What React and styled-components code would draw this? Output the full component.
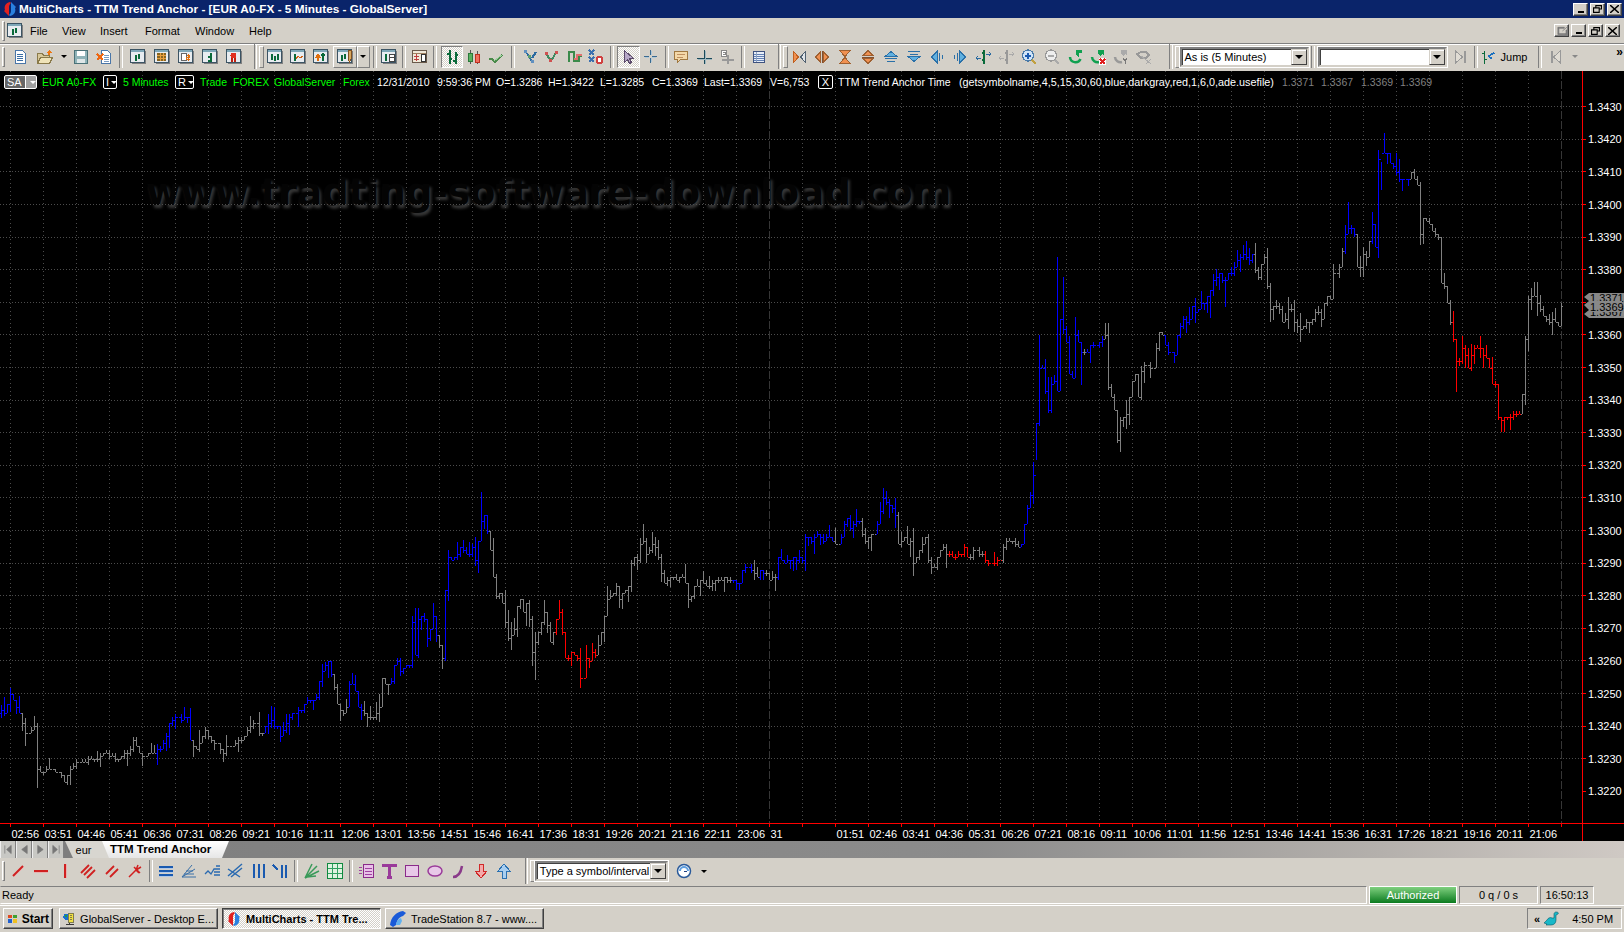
import React from 'react';
import styled, { createGlobalStyle } from 'styled-components';

const Global = createGlobalStyle`
  html, body { margin: 0; padding: 0; background: #d4d0c8; overflow: hidden; }
  * { box-sizing: border-box; }
`;

const UI = `"Liberation Sans", Arial, sans-serif`;
const FACE = '#d4d0c8';

/* ---------- shell ---------- */
const Shell = styled.div`
  width: 1624px; height: 932px; display: flex; flex-direction: column;
  background: ${FACE}; font: 11px ${UI}; color: #000; overflow: hidden;
`;
const TitleBar = styled.div`
  height: 18px; background: #0a246a; color: #fff; display: flex; align-items: center;
  padding: 0 2px 0 2px; font-weight: 700; font-size: 11.8px; gap: 1px; flex: none;
`;
const TitleText = styled.span` flex: 1; `;
const WinBtns = styled.div` display: flex; gap: ${p => p.$gap || 2}px; align-items: center; `;
const WinBtn = styled.div`
  width: 15px; height: 13px; background: ${FACE}; display: flex; align-items: center; justify-content: center;
  border: 1px solid; border-color: #fff #404040 #404040 #fff;
  box-shadow: inset -1px -1px 0 #808080;
`;
const MenuBar = styled.div`
  height: 26px; display: flex; align-items: center; flex: none; position: relative;
  border-bottom: 1px solid #808080; box-shadow: 0 1px 0 #fff;
`;
const Grip = styled.div`
  width: 3px; height: ${p => p.$h || 20}px; margin: 0 ${p => p.$mr ?? 5}px 0 2px; flex: none;
  border: 1px solid; border-color: #fff #808080 #808080 #fff;
`;
const MenuIcon = styled.div` width: 17px; height: 15px; margin: 0 6px 0 1px; flex: none; display: flex; `;
const MenuItem = styled.span`
  flex: none; width: ${p => p.$w}px; font-size: 11px;
`;
const MdiBtns = styled.div` margin-left: auto; padding-right: 4px; display: flex; align-items: center; gap: 2px; `;

const Toolbar = styled.div`
  height: ${p => p.$h || 27}px; padding-bottom: 2px; display: flex; align-items: center; flex: none; position: relative;
`;
const Btn = styled.div`
  flex: none; width: ${p => p.$w || 23}px; height: 22px; display: flex; align-items: center; justify-content: center;
  ${p => p.$pressed ? `
    border: 1px solid; border-color: #808080 #fff #fff #808080;
    background-color: #fff;
    background-image: repeating-conic-gradient(#d4d0c8 0 25%, #fff 0 50%);
    background-size: 2px 2px;
  ` : ''}
  ${p => p.$raised ? `border: 1px solid; border-color: #fff #808080 #808080 #fff;` : ''}
`;
const Sep = styled.div`
  flex: none; width: ${p => p.$w || 10}px; height: 22px; display: flex; justify-content: center;
  &::before { content: ''; width: 2px; height: 100%; border-left: 1px solid #808080; border-right: 1px solid #fff; }
`;
const Break = styled.div`
  flex: none; width: ${p => p.$w}px; align-self: stretch; display: flex; align-items: center;
  padding-left: ${p => p.$pl}px;
  &::before { content: ''; width: 2px; height: 100%; border-left: 1px solid #808080; border-right: 1px solid #fff; }
  &::after { content: ''; width: 3px; height: 20px; margin-left: 2px; border: 1px solid; border-color: #fff #808080 #808080 #fff; }
`;
const Combo = styled.div`
  flex: none; width: ${p => p.$w}px; height: 20px; background: #fff; display: flex; align-items: center;
  border: 2px solid; border-color: #808080 #d4d0c8 #d4d0c8 #808080; outline: 1px solid #fff;
  box-shadow: inset 1px 1px 0 #404040; font-size: 11px; padding-left: 3px; white-space: nowrap;
`;
const ComboText = styled.span` flex: 1; `;
const ComboBtn = styled.div`
  width: 16px; height: 16px; background: ${FACE}; flex: none; display: flex; align-items: center; justify-content: center;
  border: 1px solid; border-color: #d4d0c8 #404040 #404040 #d4d0c8; box-shadow: inset 1px 1px 0 #fff;
  &::after { content: ''; border: 4px solid transparent; border-top: 4px solid #000; border-bottom: 0; }
`;
const Caret = styled.div`
  width: 0; height: 0; border: 3px solid transparent; border-top: 3px solid ${p => p.$c || '#000'}; border-bottom: 0;
`;
const JumpLabel = styled.span` margin-left: 5px; `;
const Chevron = styled.span`
  position: absolute; right: 2px; top: 1px; font-size: 12px; font-weight: 700; letter-spacing: -1px;
`;

/* ---------- chart ---------- */
const ChartArea = styled.div`
  height: 770px; background: #000; position: relative; flex: none; overflow: hidden;
`;
const ChartSvg = styled.svg`
  position: absolute; inset: 0; display: block; width: 100%; height: 100%;
`;
const Watermark = styled.div`
  position: absolute; left: 146px; top: 99px; white-space: nowrap;
  font: 700 37.2px "DejaVu Sans", sans-serif; color: #040404;
  text-shadow: 2px 3px 3px #383838;
`;
const Legend = styled.div`
  position: absolute; left: 4px; top: 4px; height: 13px; display: flex; align-items: center; white-space: nowrap;
  font: 10.5px ${UI};
`;
const LegendText = styled.span`
  flex: none; width: ${p => p.$w}px; color: ${p => p.$c || '#fff'}; font-size: ${p => p.$fs || 10.5}px;
`;
const Tag = styled.span`
  flex: none; margin-right: ${p => p.$mr || 0}px; height: 14px; width: ${p => p.$w}px;
  border: 1px solid #fff; border-radius: 2px; color: #fff; display: flex; align-items: center; font-size: 11px;
  justify-content: ${p => p.$center ? 'center' : 'flex-start'}; padding-left: ${p => p.$center ? 0 : 2}px;
  background: ${p => p.$fill ? 'linear-gradient(90deg, #666 0 20px, #fff 20px 21px, #a0a0a0 21px)' : '#000'}; gap: ${p => p.$fill ? 8 : 2}px;
  &::after { ${p => p.$caret ? `content: ''; border: 3px solid transparent; border-top: 3px solid #fff; border-bottom: 0; margin-top: 1px;` : ''} }
`;

/* ---------- bottom ---------- */
const TabRow = styled.div`
  height: 17px; flex: none; display: flex; align-items: stretch; overflow: hidden;
  background: linear-gradient(90deg, #7d7d7d 0%, #8c8c8c 60%, #b4b0ac 85%, #cfc9c4 100%);
`;
const TabNav = styled.div`
  width: 16px; flex: none; background: #c8c8c4; border-right: 1px solid #808080; border-left: 1px solid #eee;
  display: flex; align-items: center; justify-content: center;
`;
const TabEur = styled.div`
  width: 45px; margin-left: 1px; flex: none; text-align: center; line-height: 18px; font-size: 11px; padding-right: 8px;
  background: #d8d6d0; clip-path: polygon(0 0, 100% 0, 100% 100%, 8px 100%);
`;
const TabActive = styled.div`
  width: 127px; margin-left: -8px; flex: none; font-weight: 700; font-size: 11.5px; line-height: 17px; padding-left: 8px;
  background: linear-gradient(180deg, #fff, #e6e6e6);
  clip-path: polygon(0 0, 100% 0, calc(100% - 7px) 100%, 7px 100%);
`;
const StatusBar = styled.div`
  height: 19px; flex: none; display: flex; align-items: stretch; padding: 0 0 1px 0; gap: 2px;
`;
const StatusMain = styled.div`
  width: 1367px; flex: none; padding: 2px 0 0 1px; border: 1px solid; border-color: #808080 #fff #fff transparent;
`;
const StatusCell = styled.div`
  flex: none; width: ${p => p.$w}px; display: flex; align-items: center; justify-content: center; padding-bottom: 1px;
  border: 1px solid; border-color: #808080 #fff #fff #808080;
  ${p => p.$ok ? `background: linear-gradient(180deg, #7fd07f, #0a7a1e); color: #fff; border-color: #fff;` : ''}
`;
const Taskbar = styled.div`
  height: 28px; flex: none; display: flex; align-items: flex-start; gap: 4px; padding: 2px 2px 0 3px;
  border-top: 1px solid #fff; background: ${FACE};
`;
const TaskBtn = styled.div`
  height: 21px; width: ${p => p.$w}px; flex: none; display: flex; align-items: center; gap: 4px; padding: 0 3px;
  white-space: nowrap; overflow: hidden; font-size: 11px;
  border: 1px solid; border-color: #fff #404040 #404040 #fff; box-shadow: inset -1px -1px 0 #808080;
  ${p => p.$active ? `
    border-color: #404040 #fff #fff #404040; box-shadow: inset 1px 1px 0 #808080; font-weight: 700;
    background-color: #fff;
    background-image: repeating-conic-gradient(#d4d0c8 0 25%, #fff 0 50%);
    background-size: 2px 2px;
  ` : ''}
  ${p => p.$start ? `font-weight: 700; font-size: 12px; margin-right: 2px;` : ''}
`;
const Tray = styled.div`
  margin-left: auto; width: 95px; height: 21px; flex: none; display: flex; align-items: center; padding: 0 0 0 6px; gap: 4px;
  border: 1px solid; border-color: #808080 #fff #fff #808080;
`;
const TrayTime = styled.span` margin-left: 9px; `;
const TrayMore = styled.span` font-weight: 700; font-size: 11px; letter-spacing: -1px; `;

/* ---------- icons ---------- */
const S = ({ children, w = 16, h = 16 }) => (
  <svg width={w} height={h} viewBox={`0 0 ${w} ${h}`} fill="none" shapeRendering="crispEdges">{children}</svg>
);
const Win = ({ children }) => (
  <S w={16} h={15}>
    <rect x="2" y="2" width="14" height="13" fill="#808080" />
    <rect x="0.500" y="0.500" width="14" height="13" fill="#e8ecf0" stroke="#3c5464" />
    <rect x="1" y="1" width="13" height="2" fill="#7fa8b8" />
    {children}
  </S>
);
const G = '#0a6a3a';
const bars = (a) => a.map(([x, y1, y2], i) => <path key={i} d={`M${x}.5 ${y1}V${y2}`} stroke={G} strokeWidth="2" />);
const ico = {
  doc: <S><path d="M3.500 1.500h7l3 3v10h-10z" fill="#fff" stroke="#4a76a8" /><path d="M5 5h6M5 7h6M5 9h6M5 11h6" stroke="#3a6ea5" /></S>,
  open: <S w={18}><path d="M1.500 4.500h5l1 2h6v8h-12z" fill="#d8c89a" stroke="#8a7a4a" /><path d="M1.500 14.500l3-6h12l-3 6z" fill="#efe3b8" stroke="#8a7a4a" /><path d="M10 4l3-3 3 3-2 0v2h-2v-2z" fill="#ee7711" /></S>,
  save: <S><rect x="1.500" y="1.500" width="13" height="13" fill="#8fb3b8" stroke="#4a7278" /><rect x="4" y="2" width="8" height="5" fill="#fff" /><rect x="4" y="10" width="8" height="4" fill="#dfe7e8" /></S>,
  xdoc: <S><path d="M5.500 1.500h6l3 3v10h-9z" fill="#fff" stroke="#4a76a8" /><path d="M8 6h5M8 8h5M8 10h5M8 12h5" stroke="#7a9ac0" /><path d="M1 5l6 6M7 5l-6 6" stroke="#ee6611" strokeWidth="2" /></S>,
  wChart: <Win>{bars([[5, 6, 12], [8, 5, 10]])}</Win>,
  wGrid: <Win><rect x="3" y="4" width="9" height="8" fill="#886622" /><path d="M3 6h9M3 9h9M6 4v8M9 4v8" stroke="#e8a040" /></Win>,
  wDollar: <Win><rect x="3" y="4" width="5" height="7" fill="#fff" stroke="#666" /><path d="M10 5v7M8.500 6.500h3v2h-3v2h3" stroke="#e07010" /></Win>,
  wF: <Win><path d="M10 4.500H8.500v7H6M6 7.500h4" stroke={G} strokeWidth="2" /></Win>,
  wRib: <Win><circle cx="7.500" cy="6.500" r="3" fill="#e03020" /><path d="M6 9v4M9 9v4" stroke="#c02010" strokeWidth="2" /></Win>,
  wBars: <Win>{bars([[4, 5, 11], [7, 7, 12], [10, 5, 11]])}</Win>,
  wLine: <Win>{bars([[4, 5, 12]])}<path d="M6 10l2-3 2 2 3-2" stroke="#d06010" /></Win>,
  wArrow: <Win><path d="M5 12V7M3 9l2-3 2 3" stroke="#e07010" strokeWidth="2" /><path d="M10 4v8M8 6h4" stroke={G} strokeWidth="2" /></Win>,
  wPen: <Win>{bars([[4, 6, 12], [7, 5, 10]])}<path d="M11 1h3v9l-1.500 3-1.500-3z" fill="#d8a860" stroke="#805020" /></Win>,
  wSheet: <Win>{bars([[4, 5, 12]])}<rect x="8" y="5" width="5" height="7" fill="#fff" stroke="#444" /><path d="M8 8.500h5" stroke="#444" /></Win>,
  table: <S><rect x="1.500" y="1.500" width="14" height="12" fill="#f0e8d8" stroke="#6a5a4a" /><path d="M2 4h13" stroke="#a08060" /><path d="M3 7h5M3 10h5M5 5v7" stroke="#c04040" /><rect x="10" y="5" width="4" height="7" fill="#fff" stroke="#333" /></S>,
  ohlc: <S><path d="M5.500 1v14M3 5h3M5 10h3M11.500 3v12M9 12h3M11 6h3" stroke={G} strokeWidth="2" /></S>,
  candle: <S><path d="M4.500 1v14M11.500 2v13" stroke="#555" /><rect x="2.500" y="4.500" width="4" height="8" fill="#5ab060" stroke="#2a7a3a" /><rect x="9.500" y="5.500" width="4" height="8" fill="#f07060" stroke="#c03020" /></S>,
  check: <S><path d="M1 10h3l3 3 7-7" stroke="#4a8a4a" strokeWidth="2" /><path d="M6 12l8-6" stroke="#a0d0a0" /></S>,
  zig1: <S><path d="M3 2l4 5M7 8l3 4M14 3l-4 6" stroke="#2a6aa0" strokeWidth="2" /><rect x="2" y="1" width="3" height="3" fill="#6090c0" /><rect x="6" y="6" width="3" height="3" fill="#60a070" /><rect x="9" y="11" width="3" height="3" fill="#6090c0" /></S>,
  zig2: <S><path d="M2 4l4 7 3-2 3-6" stroke="#408a60" strokeWidth="2" /><rect x="1" y="3" width="3" height="3" fill="#d05050" /><rect x="5" y="10" width="3" height="3" fill="#d05050" /><rect x="11" y="2" width="3" height="3" fill="#d05050" /></S>,
  step: <S><path d="M3 13V3h5v9h5V7h3" stroke="#3a8a4a" strokeWidth="2" /><path d="M8 10h3V6h5" stroke="#e07070" strokeWidth="2" /></S>,
  xcirc: <S><path d="M1 1l5 5M6 1l-5 5M1 8l5 5M6 8l-5 5" stroke="#3a70b0" strokeWidth="2" /><circle cx="11.500" cy="11" r="3" fill="#fff" stroke="#d04040" strokeWidth="2" /></S>,
  cursor: <S><path d="M4.500 1.500v12l3-3 2 4 2-1-2-4h4z" fill="#b8a8c8" stroke="#5a4a6a" /></S>,
  cross: <S><path d="M7.500 1v5M7.500 9v5M1 7.500h5M9 7.500h5" stroke="#3a6a90" /><path d="M2 8.500h4M9 8.500h4M8.500 2v4M8.500 9v4" stroke="#b0c8d8" /></S>,
  balloon: <S><path d="M1.500 2.500h13v8h-7l-3 3v-3h-3z" fill="#f4d8a8" stroke="#a07840" /><path d="M4 5h8M4 8h6" stroke="#c09060" /></S>,
  plus: <S><path d="M8.500 1v14M1 9.500h15" stroke="#1a4a5a" /><path d="M9.500 2v13M2 10.500h14" stroke="#a0b8c0" /></S>,
  pplus: <S><path d="M8.500 6v9M3 10.500h12" stroke="#999" strokeWidth="2" /><rect x="2.500" y="1.500" width="5" height="6" fill="#fff" stroke="#888" /><path d="M4 3h2v2H4" stroke="#888" /></S>,
  grid: <S><rect x="2.500" y="2.500" width="12" height="11" fill="#e8eef8" stroke="#334a7a" /><path d="M3 5h11M3 7.500h11M3 10h11M3 12h11" stroke="#5a7ab0" /><path d="M5.500 3v10" stroke="#8aa0c0" /></S>,
  bow: <S><path d="M2.500 2.500l5 5.500-5 5.500z" fill="#f09050" stroke="#c06020" /><path d="M14.500 2.500l-5 5.500 5 5.500z" fill="#e0e4e8" stroke="#506070" /></S>,
  dia: <S><path d="M6.500 3l-5 5 5 5z" fill="#f09050" stroke="#a06030" /><path d="M9.500 3l5 5-5 5z" fill="#f09050" stroke="#a06030" /><path d="M8 2v12" stroke="#805030" /></S>,
  hour: <S><path d="M2.500 1.500h11l-5.500 6z" fill="#f09050" stroke="#a06030" /><path d="M2.500 14.500h11l-5.500-6z" fill="#f09050" stroke="#a06030" /></S>,
  hour2: <S><path d="M3 6.500l5-5 5 5z" fill="#f09050" stroke="#a06030" /><path d="M3 9.500l5 5 5-5z" fill="#f09050" stroke="#a06030" /><path d="M2 8h12" stroke="#805030" /></S>,
  up: <S><path d="M2 7.500l6-5 6 5z" fill="#60b0e0" stroke="#2a70a8" /><path d="M2 9.500h12M4 12.500h8" stroke="#2a70a8" /></S>,
  down: <S><path d="M2 7.500l6 5 6-5z" fill="#60b0e0" stroke="#2a70a8" /><path d="M2 2.500h12M4 5.500h8" stroke="#2a70a8" /></S>,
  left: <S><path d="M8.500 2l-6 6 6 6z" fill="#60b0e0" stroke="#2a70a8" /><path d="M10.500 4v8M13.500 6v4" stroke="#2a70a8" /></S>,
  right: <S><path d="M7.500 2l6 6-6 6z" fill="#60b0e0" stroke="#2a70a8" /><path d="M5.500 4v8M2.500 6v4" stroke="#2a70a8" /></S>,
  expand: <S><path d="M8.500 1v14M7 4h3M7 11h3" stroke={G} strokeWidth="2" /><path d="M1 9h5M3 7L1 9l2 2M11 5h5M14 3l2 2-2 2" stroke="#2a6aa0" /></S>,
  expandG: <S><path d="M8.500 1v14M7 4h3M7 11h3" stroke="#999" strokeWidth="2" /><path d="M1 9h5M3 7L1 9l2 2M11 5h5M14 3l2 2-2 2" stroke="#aaa" /></S>,
  zoomIn: <S><circle cx="7" cy="6.500" r="5.500" fill="#cfe4f8" stroke="#4a7aa8" strokeWidth="1.300" /><path d="M4 6.500h6M7 3.500v6" stroke="#1a5ab0" strokeWidth="2" /><path d="M11 11l4 4" stroke="#c0a040" strokeWidth="2.500" /></S>,
  zoomOut: <S><circle cx="7" cy="6.500" r="5.500" fill="#eee" stroke="#999" strokeWidth="1.300" /><path d="M4 6.500h6" stroke="#aaa" strokeWidth="2" /><path d="M11 11l4 4" stroke="#aaa" strokeWidth="2.500" /></S>,
  refresh: <S><path d="M3 8a5.500 5.500 0 0 0 10.500 2" stroke="#10a050" strokeWidth="2.500" fill="none" shapeRendering="auto" /><path d="M9 1h6v3h-3v5l-3-3z" fill="#10a050" /></S>,
  refreshX: <S><path d="M2 8a5.500 5.500 0 0 0 7 5" stroke="#10a050" strokeWidth="2.500" shapeRendering="auto" /><path d="M8 1h6v5l-2-1-2 2-2-2z" fill="#10a050" /><rect x="9" y="9" width="7" height="7" fill="#fff" /><path d="M10 10l5 5M15 10l-5 5" stroke="#e02020" strokeWidth="1.500" /></S>,
  refreshY: <S><path d="M2 8a5.500 5.500 0 0 0 7 5" stroke="#999" strokeWidth="2.500" shapeRendering="auto" /><path d="M8 1h6v5l-2-1-2 2-2-2z" fill="#aaa" /><path d="M10 9l2 3 2-3M12 12v3" stroke="#777" /></S>,
  eye: <S><path d="M1 5l4-2h5l3 3-3 3H5z" stroke="#999" strokeWidth="2" /><path d="M5 7l8 6M10 11l5 4M15 10l-5 5" stroke="#aaa" /></S>,
  skipEnd: <S><path d="M3.500 2l7 6-7 6z" fill="#e0dcd4" stroke="#999" /><path d="M12.500 2v12" stroke="#999" strokeWidth="2" /></S>,
  skipBack: <S><path d="M12.500 2l-7 6 7 6z" fill="#e0dcd4" stroke="#999" /><path d="M3.500 2v12" stroke="#999" strokeWidth="2" /></S>,
  jump: <S w={20}><path d="M6.500 1v15M4 4h3M6 11h3" stroke={G} strokeWidth="2" /><path d="M11 7l7-4M11 7l4 3" stroke="#1a70c0" strokeWidth="2" /></S>,
  lDiag: <S><path d="M3 13L13 3" stroke="#d02020" strokeWidth="2" shapeRendering="auto" /><path d="M4 14L14 4" stroke="#e8b0b0" shapeRendering="auto" /></S>,
  lHorz: <S><path d="M1 7.500h14" stroke="#d02020" strokeWidth="2" /><path d="M1 9.500h14" stroke="#e8b0b0" /></S>,
  lVert: <S><path d="M7.500 1v14" stroke="#d02020" strokeWidth="2" /><path d="M9.500 1v14" stroke="#e8b0b0" /></S>,
  l3: <S><path d="M1 10L9 2M4 12L12 4M7 15l8-8" stroke="#d02020" strokeWidth="1.800" shapeRendering="auto" /></S>,
  l2: <S><path d="M2 11L10 3M6 14l8-8" stroke="#d02020" strokeWidth="1.800" shapeRendering="auto" /></S>,
  fork: <S><path d="M2 14L9 7M9 7l2-5M9 7l3 3M9 7l5-3" stroke="#d02020" strokeWidth="1.500" shapeRendering="auto" /><path d="M7 4l6 6" stroke="#d02020" strokeWidth="1.500" shapeRendering="auto" /></S>,
  h3: <S><path d="M1 3.500h14M1 7.500h14M1 11.500h14" stroke="#1a5ab0" strokeWidth="2" /><path d="M1 5.500h14M1 9.500h14M1 13.500h14" stroke="#b0c8e8" /></S>,
  fan: <S><path d="M1 14h14M1 14L14 6M1 14L11 2M3 11h10M5 8h7" stroke="#3a70a8" shapeRendering="auto" /></S>,
  stepL: <S><path d="M1 11l3-3 3 3 3-5h6M10 9h6M10 12h6M12 3h4" stroke="#2a6ab0" strokeWidth="1.300" shapeRendering="auto" /></S>,
  xfan: <S><path d="M1 13L15 1M1 6l12 8M4 14L15 5" stroke="#2a6ab0" strokeWidth="1.500" shapeRendering="auto" /></S>,
  v3: <S><path d="M3.500 1v14M8.500 1v14M13.500 1v14" stroke="#1a5ab0" strokeWidth="2" /></S>,
  v2: <S><path d="M9.500 2v13M13.500 2v13" stroke="#1a5ab0" strokeWidth="2" /><path d="M1 2l5 5" stroke="#1a5ab0" strokeWidth="2" /></S>,
  gFan: <S><path d="M1 15L8 1M1 15L13 3M1 15L15 8M3 14L12 13" stroke="#3a9a5a" strokeWidth="1.500" shapeRendering="auto" /></S>,
  gGrid: <S><rect x="0.500" y="0.500" width="15" height="15" fill="#dff2e0" stroke="#108a40" /><path d="M1 5.500h14M1 10.500h14M5.500 1v14M10.500 1v14" stroke="#30a060" /></S>,
  note: <S><rect x="5.500" y="1.500" width="10" height="13" fill="#e8c0e8" stroke="#8a2a8a" /><path d="M7 5h7M7 8h7M7 11h7" stroke="#a040a0" /><path d="M1 4h3M1 7h3M1 10h3" stroke="#a040a0" /></S>,
  T: <S><path d="M2 4V2h12v2M8 2v12M5.500 14h5" stroke="#9a3a9a" strokeWidth="3" /></S>,
  rect: <S><rect x="1.500" y="2.500" width="13" height="11" fill="#e8c8e8" stroke="#8a2a8a" strokeWidth="1.500" /></S>,
  oval: <S><ellipse cx="8" cy="8" rx="7" ry="5" fill="#e8c8e8" stroke="#9a3a9a" strokeWidth="1.500" shapeRendering="auto" /></S>,
  curve: <S><path d="M3 14c5 0 8-5 9-11" stroke="#8a3a8a" strokeWidth="2.500" shapeRendering="auto" /></S>,
  dnArrow: <S><path d="M6 1h4v7h4l-6 7-6-7h4z" fill="#f4a8a8" stroke="#d02828" /></S>,
  upArrow: <S><path d="M6 15h4V8h4L8 1 2 8h4z" fill="#a8cef0" stroke="#2a70b0" /></S>,
  clock: <S><circle cx="8" cy="8" r="6.500" fill="#fff" stroke="#2a5a9a" strokeWidth="1.500" shapeRendering="auto" /><path d="M4 8a4 4 0 0 1 8 0" stroke="#60a0e0" strokeWidth="2" shapeRendering="auto" /><path d="M8 8l3 1" stroke="#204080" /></S>,
};
const I = ({ n }) => ico[n];

const Logo = ({ s = 16 }) => (
  <svg width={s} height={s} viewBox="0 0 16 16">
    <path d="M8 1C3 2 2 6 3 9l-1 1 5 5V6c0-2 1-3 2-4z" fill="#e02020" />
    <path d="M8 15c5-1 6-5 5-8l1-1-5-5v9c0 2-1 3-2 4z" fill="#2a80e0" />
  </svg>
);
const TsLogo = () => (
  <svg width="18" height="18" viewBox="0 0 18 18">
    <path d="M1 15C2 7 7 2 14 1l3 2-3 3c-4 1-6 4-7 9l-3 2z" fill="#1a5ad8" />
    <path d="M7 15c0-3 2-6 5-7l1 3-2 4z" fill="#60b0f0" />
  </svg>
);
const WinFlag = () => (
  <svg width="15" height="14" viewBox="0 0 15 14" shapeRendering="crispEdges">
    <rect x="1" y="1" width="6" height="5" fill="#e04a20" /><rect x="8" y="1" width="6" height="5" fill="#40a030" />
    <rect x="1" y="7" width="6" height="6" fill="#2060d0" /><rect x="8" y="7" width="6" height="6" fill="#f0c020" />
  </svg>
);
const ServerIcon = () => (
  <svg width="18" height="18" viewBox="0 0 18 18" shapeRendering="crispEdges">
    <circle cx="5" cy="6" r="4.500" fill="#1a70d0" /><circle cx="4" cy="5" r="2" fill="#20a040" />
    <rect x="7" y="1" width="8" height="13" fill="#f0e040" stroke="#555" /><path d="M9 4h4M9 7h4M9 10h4" stroke="#555" />
    <path d="M4 16h11M9 14v2" stroke="#000" />
  </svg>
);
const Dino = () => (
  <svg width="16" height="16" viewBox="0 0 16 16">
    <path d="M13 1c2 0 3 1 2 2l-2 1v5c0 3-2 5-5 5H3l1-1-3-1 3-3c1-2 3-3 5-2l2 0V3c0-1 1-2 2-2z" fill="#18b8c8" stroke="#0a5a6a" strokeWidth=".6" />
  </svg>
);
const Glyph = ({ k }) => {
  const c = '#777';
  const p = {
    first: 'M2 1v9M9 1L4 5.500 9 10z', prev: 'M9 1L3 5.500 9 10z', next: 'M3 1l6 4.500L3 10z', last: 'M2 1l5 4.500L2 10zM9 1v9',
    min: 'M1 6h6v2H1z', max: 'M2 0h6v4H6v3H0V2h2zM1 3v3h4V3zM3 1v1h3v1h1V1z', close: 'M0 0l8 7M8 0L0 7',
    det: 'M1 2h7v1H1zM1 3h1v6H1zM1 9h9v1H1zM10 5h1v5h-1zM6 6l6-5',
  }[k];
  if (k === 'close') return <svg width="9" height="8" viewBox="0 0 8 7"><path d={p} stroke="#000" strokeWidth="1.400" /></svg>;
  if (k === 'min') return <svg width="8" height="9" viewBox="0 0 8 9"><path d={p} fill="#000" /></svg>;
  if (k === 'max') return <svg width="9" height="8" viewBox="0 0 8 7"><path d={p} fill="#000" fillRule="evenodd" /></svg>;
  return <svg width="10" height="11" viewBox="0 0 11 11"><path d={p} fill={c} stroke={c} strokeWidth=".8" /></svg>;
};

/* ---------- chart data ---------- */
const KP = [
  [0,712],[5,715],[7,703],[10,696],[15,705],[19,711],[24,731],[34,730],[35,757],[38,772],[50,770],[60,775],[64,782],[72,765],[80,762],[95,760],[105,752],[115,760],[130,750],[133,740],[140,755],[150,755],[158,752],[166,737],[170,718],[187,717],[190,740],[195,750],[205,730],[215,745],[222,750],[232,745],[240,740],[255,722],[260,735],[270,720],[280,735],[290,712],
  [300,712],[308,700],[316,700],[320,673],[327,660],[333,684],[338,710],[345,715],[350,680],[355,692],[358,707],[365,715],[372,715],[378,715],[380,700],[382,680],[390,690],[395,660],[400,672],[410,665],[412,623],[415,655],[417,587],[418,617],[424,617],[428,647],[432,613],[437,640],[442,660],[443,623],[447,557],[453,560],[460,547],[467,557],[472,547],[473,570],[478,540],[483,510],[487,530],[490,550],[494,585],[498,603],[500,580],[503,610],[508,637],[515,630],[518,593],[523,613],[527,597],[532,653],[535,643],[540,623],[545,610],[550,643],[553,635],[558,610],[562,632],[563,663],[570,655],[577,658],[578,682],[583,677],[585,663],[592,655],[595,657],[598,643],[603,630],[605,602],[610,597],[615,587],[620,600],[627,587],[630,577],[632,558],[637,558],[638,547],[642,537],[647,557],
  [653,542],[657,553],[660,565],[662,583],[670,577],[677,580],[683,573],[688,600],[693,590],[700,580],[707,592],[715,580],[720,583],[727,578],[733,580],[740,583],[743,567],[750,565],[755,577],[762,570],[768,580],[775,575],[778,558],[785,563],[793,558],[802,560],[805,538],[812,540],[818,535],[823,543],[828,535],[833,545],[840,545],[843,530],[847,518],[850,530],[855,520],[860,522],[863,540],[870,537],[877,527],[883,500],[890,505],[895,512],[896,548],[903,538],[910,543],[913,562],[918,552],[925,540],[928,560],[933,570],[937,557],[943,548],[948,555],[953,560],[960,553],[965,548],[968,560],[973,550],[982,555],[987,563],[993,563],[1000,560],[1005,540],[1013,542],[1020,550],[1023,532],[1028,502],[1032,490],
  [1036,425],[1040,350],[1043,373],[1048,413],[1052,375],[1057,390],[1058,295],[1062,340],[1065,313],[1067,373],[1072,377],[1075,337],[1082,353],[1087,352],[1092,343],[1097,347],[1100,338],[1105,338],[1106,383],[1110,393],[1113,403],[1117,440],[1120,422],[1127,413],[1130,393],[1135,372],[1137,410],[1140,372],[1147,363],[1152,375],[1155,360],[1158,330],[1163,338],[1168,353],[1173,347],[1175,362],[1178,325],[1183,322],[1188,323],[1192,307],[1197,318],[1200,303],[1205,303],[1208,297],[1213,280],[1218,272],[1223,285],[1228,272],[1233,273],[1238,255],[1247,257],[1250,262],[1253,252],[1256,282],[1260,268],[1265,255],[1268,308],[1277,303],[1283,327],[1287,312],[1290,307],[1295,325],[1300,330],[1305,325],[1312,322],[1315,312],[1322,317],[1325,297],[1330,298],[1332,273],[1337,272],[1340,263],[1343,245],[1347,227],[1353,228],[1355,245],[1358,280],[1362,255],[1366,255],[1368,248],[1372,225],[1375,247],[1378,160],[1385,150],[1390,162],[1395,172],[1400,182],[1407,178],[1412,173],[1417,185],[1418,243],[1423,220],[1428,222],[1433,232],[1438,238],[1439,280],[1445,292],[1450,323],[1453,340],[1457,368],[1460,357],[1463,347],[1468,368],[1473,347],[1478,350],[1485,357],[1488,368],[1492,383],[1495,387],[1497,417],[1502,420],[1507,417],[1513,415],[1520,413],[1523,387],[1525,338],[1527,300],[1530,297],[1533,293],[1540,310],[1545,320],[1553,320],[1557,330],[1561,307],
];
const BLUE = [[0,20],[157,192],[265,333],[349,361],[390,437],[444,487],[733,752],[760,765],[778,832],[841,860],[877,895],[1021,1082],[1087,1103],[1165,1253],[1345,1355],[1370,1410]];
const RED = [[555,595],[949,968],[985,1000],[1453,1520]];
const QUIET = [[925,1020],[1497,1522],[60,150]];
const SPIKES = [[37,0,788],[482,492,0],[535,0,680],[580,0,688],[1057,257,0],[1037,0,460],[1384,133,0],[1457,0,392],[1503,0,432],[642,524,0],[1040,335,0],[1063,277,0],[886,491,0],[1225,0,307],[1360,0,277],[1348,202,0],[1080,0,385],[1120,0,452],[1270,0,322],[1210,0,318],[1500,0,432],[1075,317,0],[1380,190,0]];
const interp = (x) => {
  for (let i = 1; i < KP.length; i++) {
    if (x <= KP[i][0]) {
      const [a, b] = [KP[i - 1], KP[i]];
      return a[1] + (b[1] - a[1]) * (x - a[0]) / Math.max(1, b[0] - a[0]);
    }
  }
  return KP[KP.length - 1][1];
};
const inR = (r, x) => r.some(([a, b]) => x >= a && x <= b);
const buildBars = () => {
  let seed = 12345;
  const rnd = () => { seed = (seed * 16807) % 2147483647; return seed / 2147483647; };
  const q = (v) => Math.round(v / 3.26) * 3.26;
  const paths = { '#808080': '', '#0000ff': '', '#ff0000': '' };
  let prev = Math.floor(q(interp(1))) + 0.5;
  for (let i = 0; i <= 520; i++) {
    const x = 1 + 3 * i;
    const quiet = inR(QUIET, x);
    const c = Math.floor(q(interp(x) + (rnd() - 0.5) * (quiet ? 2 : 4.5))) + 0.5;
    const o = prev;
    const rU = rnd(), rD = rnd();
    const big = quiet ? 0.92 : 0.72;
    let hi = Math.min(o, c) - (rU > big ? 5 + rnd() * 9 : rU > 0.4 ? 3 : 0);
    let lo = Math.max(o, c) + (rD > big ? 5 + rnd() * 9 : rD > 0.4 ? 3 : 0);
    SPIKES.forEach(([sx, sh, sl]) => {
      if (Math.abs(sx - x) <= 1) { if (sh) hi = sh; if (sl) lo = sl; }
    });
    hi = Math.floor(hi); lo = Math.floor(lo);
    const col = inR(RED, x) ? '#ff0000' : inR(BLUE, x) ? '#0000ff' : '#808080';
    paths[col] += `M${x + 0.5} ${hi}V${lo}M${x - 1} ${o}h1M${x + 1} ${c}h1`;
    prev = c;
  }
  return paths;
};
const BARS = buildBars();

const CHART_TOP = 71;
const priceY = (k) => 106.7 + 32.6 * k; // page y of 1.3430 - k*0.0010
const LEFT_TIMES = ['02:56','03:51','04:46','05:41','06:36','07:31','08:26','09:21','10:16','11:11','12:06','13:01','13:56','14:51','15:46','16:41','17:36','18:31','19:26','20:21','21:16','22:11','23:06','31'];
const RIGHT_TIMES = ['01:51','02:46','03:41','04:36','05:31','06:26','07:21','08:16','09:11','10:06','11:01','11:56','12:51','13:46','14:41','15:36','16:31','17:26','18:21','19:16','20:11','21:06'];
const TIMES = [...LEFT_TIMES.map((t, i) => [i, t]), ...RIGHT_TIMES.map((t, i) => [25 + i, t])];
const PRICES = Array.from({ length: 22 }, (_, k) => (1.3430 - k * 0.001).toFixed(4));

const Chart = () => (
  <ChartSvg viewBox={`0 ${CHART_TOP} 1624 770`}>
    <g shapeRendering="crispEdges">
      {Array.from({ length: 48 }, (_, k) => {
        const x = 10.5 + 33 * k;
        const strong = k === 23 || k === 47;
        return <path key={k} d={`M${x} 71V824`} stroke={strong ? '#363636' : '#4c4c4c'} strokeDasharray={strong ? '8 2' : '1 3'} />;
      })}
      {PRICES.slice(0, 21).map((_, k) => (
        <path key={k} d={`M0 ${Math.floor(priceY(k)) + 0.5}H1582`} stroke="#4c4c4c" strokeDasharray="1 2" />
      ))}
      <path d={BARS['#808080']} stroke="#808080" />
      <path d={BARS['#0000ff']} stroke="#0000ff" />
      <path d={BARS['#ff0000']} stroke="#ff0000" />
      <path d="M1582.5 71V841" stroke="#ff0000" />
      <path d="M0 823.5H1624" stroke="#ff0000" />
      {Array.from({ length: 48 }, (_, k) => <path key={k} d={`M${10.5 + 33 * k} 824v3`} stroke="#ff0000" />)}
      {PRICES.map((_, k) => <path key={k} d={`M1583 ${Math.floor(priceY(k)) + 0.5}h3`} stroke="#ff0000" />)}
    </g>
    <g fontFamily={UI} fontSize="11" fill="#fff">
      {TIMES.map(([k, t]) => <text key={k} x={11.5 + 33 * k} y="838">{t}</text>)}
      <clipPath id="axisclip"><rect x="1584" y="71" width="40" height="752" /></clipPath>
      <g clipPath="url(#axisclip)">
        {PRICES.map((p, k) => <text key={p} x="1588" y={priceY(k) + 4}>{p}</text>)}
      </g>
    </g>
    <path d="M1589 293H1624V318H1589L1584 314L1589 310L1584 305L1589 301L1584 297Z" fill="#888888" />
    <g fontFamily={UI} fontSize="11" fill="#000">
      <text x="1590" y="302">1.3371</text>
      <text x="1590" y="316">1.3367</text>
      <rect x="1589" y="301" width="33" height="11" fill="#888888" />
      <text x="1590" y="310.500">1.3369</text>
    </g>
  </ChartSvg>
);

/* ---------- bars of buttons ---------- */
const row1a = [
  ['doc', 23], ['open', 26], ['*', 12], ['save', 23], ['xdoc', 23], ['|', 10],
  ['wChart', 24], ['wGrid', 24], ['wDollar', 24], ['wF', 24], ['wRib', 24],
];
const row1b = [
  ['wBars', 23], ['wLine', 23], ['wArrow', 23], ['^wPen', 24], ['box*', 13], ['|', 10], ['wSheet', 18], ['|', 12], ['table', 19], ['|', 12],
  ['^ohlc', 22], ['candle', 22], ['check', 23], ['|', 11], ['zig1', 22], ['zig2', 22], ['step', 22], ['xcirc', 22], ['|', 10],
  ['^cursor', 23], ['cross', 22], ['|', 10], ['balloon', 18], ['plus', 28], ['pplus', 18], ['|', 15], ['grid', 15],
];
const row1c = ['bow','dia','hour','hour2','up','down','left','right','expand','expandG','zoomIn','zoomOut','refresh','refreshX','refreshY','eye'];
const row3a = [
  ['lDiag', 23.5], ['lHorz', 23.5], ['lVert', 23.5], ['l3', 23.5], ['l2', 23.5], ['fork', 23.5], ['|', 8],
  ['h3', 22.8], ['fan', 22.8], ['stepL', 22.8], ['xfan', 22.8], ['v3', 22.8], ['v2', 22.8], ['|', 9],
  ['gFan', 22], ['gGrid', 24], ['|', 8],
  ['note', 23], ['T', 23], ['rect', 23], ['oval', 23], ['curve', 23], ['dnArrow', 23], ['upArrow', 23],
];
const renderItems = (items) => items.map(([n, w], i) => {
  if (n === '|') return <Sep key={i} $w={w} />;
  if (n === '*') return <Btn key={i} $w={w}><Caret /></Btn>;
  if (n === 'box*') return <Btn key={i} $w={w} $raised><Caret /></Btn>;
  if (n[0] === '^') return <Btn key={i} $w={w} $pressed={n !== '^wPen'} $raised={n === '^wPen'}><I n={n.slice(1)} /></Btn>;
  return <Btn key={i} $w={w}><I n={n} /></Btn>;
});

const GREEN = '#00ff00';
const GRAY = '#808080';

export default function App() {
  return (
    <Shell>
      <Global />
      <TitleBar>
        <Logo />
        <TitleText>MultiCharts - TTM Trend Anchor - [EUR A0-FX - 5 Minutes - GlobalServer]</TitleText>
        <WinBtns>
          <WinBtn><Glyph k="min" /></WinBtn><WinBtn><Glyph k="max" /></WinBtn><WinBtn><Glyph k="close" /></WinBtn>
        </WinBtns>
      </TitleBar>
      <MenuBar>
        <Grip $mr={1} />
        <MenuIcon><Win>{bars([[5, 6, 12], [8, 5, 10]])}</Win></MenuIcon>
        <MenuItem $w={32}>File</MenuItem>
        <MenuItem $w={38}>View</MenuItem>
        <MenuItem $w={45}>Insert</MenuItem>
        <MenuItem $w={50}>Format</MenuItem>
        <MenuItem $w={54}>Window</MenuItem>
        <MenuItem $w={30}>Help</MenuItem>
        <MdiBtns>
          <WinBtn><Glyph k="det" /></WinBtn>
          <WinBtn><Glyph k="min" /></WinBtn><WinBtn><Glyph k="max" /></WinBtn><WinBtn><Glyph k="close" /></WinBtn>
        </MdiBtns>
      </MenuBar>
      <Toolbar>
        <Grip $mr={0} />
        <Btn $w={3.5} />
        {renderItems(row1a)}
        <Break $w={18} $pl={8} />
        {renderItems(row1b)}
        <Break $w={22} $pl={12} />
        {row1c.map((n) => <Btn key={n} $w={23}><I n={n} /></Btn>)}
        <Break $w={24} $pl={13} />
        <Combo $w={129}><ComboText>As is (5 Minutes)</ComboText><ComboBtn /></Combo>
        <Sep $w={9} />
        <Combo $w={129}><ComboText /><ComboBtn /></Combo>
        <Btn $w={26}><I n="skipEnd" /></Btn>
        <Sep $w={6} />
        <Btn $w={49}><I n="jump" /><JumpLabel>Jump</JumpLabel></Btn>
        <Btn $w={6} />
        <Sep $w={12} />
        <Btn $w={20}><I n="skipBack" /></Btn>
        <Btn $w={18}><Caret $c="#888" /></Btn>
        <Chevron>»</Chevron>
      </Toolbar>
      <ChartArea>
        <Watermark>www.tradting-software-download.com</Watermark>
        <Chart />
        <Legend>
          <Tag $w={33} $mr={5} $fill $caret>SA</Tag>
          <LegendText $w={61} $c={GREEN}>EUR A0-FX</LegendText>
          <Tag $w={14} $mr={6} $caret>I</Tag>
          <LegendText $w={52} $c={GREEN}>5 Minutes</LegendText>
          <Tag $w={19} $mr={6} $caret>R</Tag>
          <LegendText $w={33} $c={GREEN}>Trade</LegendText>
          <LegendText $w={41} $c={GREEN}>FOREX</LegendText>
          <LegendText $w={69} $c={GREEN}>GlobalServer</LegendText>
          <LegendText $w={34} $c={GREEN}>Forex</LegendText>
          <LegendText $w={60}>12/31/2010</LegendText>
          <LegendText $w={59}>9:59:36 PM</LegendText>
          <LegendText $w={52}>O=1.3286</LegendText>
          <LegendText $w={52}>H=1.3422</LegendText>
          <LegendText $w={52}>L=1.3285</LegendText>
          <LegendText $w={52}>C=1.3369</LegendText>
          <LegendText $w={66}>Last=1.3369</LegendText>
          <LegendText $w={48}>V=6,753</LegendText>
          <Tag $w={15} $mr={5} $center>X</Tag>
          <LegendText $w={121}>TTM Trend Anchor Time</LegendText>
          <LegendText $w={323} $fs={10.8}>(getsymbolname,4,5,15,30,60,blue,darkgray,red,1,6,0,ade.usefile)</LegendText>
          <LegendText $w={39} $c={GRAY}>1.3371</LegendText>
          <LegendText $w={40} $c={GRAY}>1.3367</LegendText>
          <LegendText $w={39} $c={GRAY}>1.3369</LegendText>
          <LegendText $w={39} $c={GRAY}>1.3369</LegendText>
        </Legend>
      </ChartArea>
      <TabRow>
        {['first', 'prev', 'next', 'last'].map((k) => <TabNav key={k}><Glyph k={k} /></TabNav>)}
        <TabEur>eur</TabEur>
        <TabActive>TTM Trend Anchor</TabActive>
      </TabRow>
      <Toolbar $h={28}>
        <Grip $mr={0} />
        <Btn $w={1} />
        {renderItems(row3a)}
        <Break $w={19} $pl={9} />
        <Combo $w={133}><ComboText>Type a symbol/interval</ComboText><ComboBtn /></Combo>
        <Btn $w={32}><I n="clock" /></Btn>
        <Btn $w={8}><Caret /></Btn>
      </Toolbar>
      <StatusBar>
        <StatusMain>Ready</StatusMain>
        <StatusCell $w={88} $ok>Authorized</StatusCell>
        <StatusCell $w={79}>0 q / 0 s</StatusCell>
        <StatusCell $w={54}>16:50:13</StatusCell>
      </StatusBar>
      <Taskbar>
        <TaskBtn $w={50} $start><WinFlag />Start</TaskBtn>
        <TaskBtn $w={159}><ServerIcon />GlobalServer - Desktop E...</TaskBtn>
        <TaskBtn $w={159} $active><Logo />MultiCharts - TTM Tre...</TaskBtn>
        <TaskBtn $w={159}><TsLogo />TradeStation 8.7 - www....</TaskBtn>
        <Tray><TrayMore>«</TrayMore><Dino /><TrayTime>4:50 PM</TrayTime></Tray>
      </Taskbar>
    </Shell>
  );
}
